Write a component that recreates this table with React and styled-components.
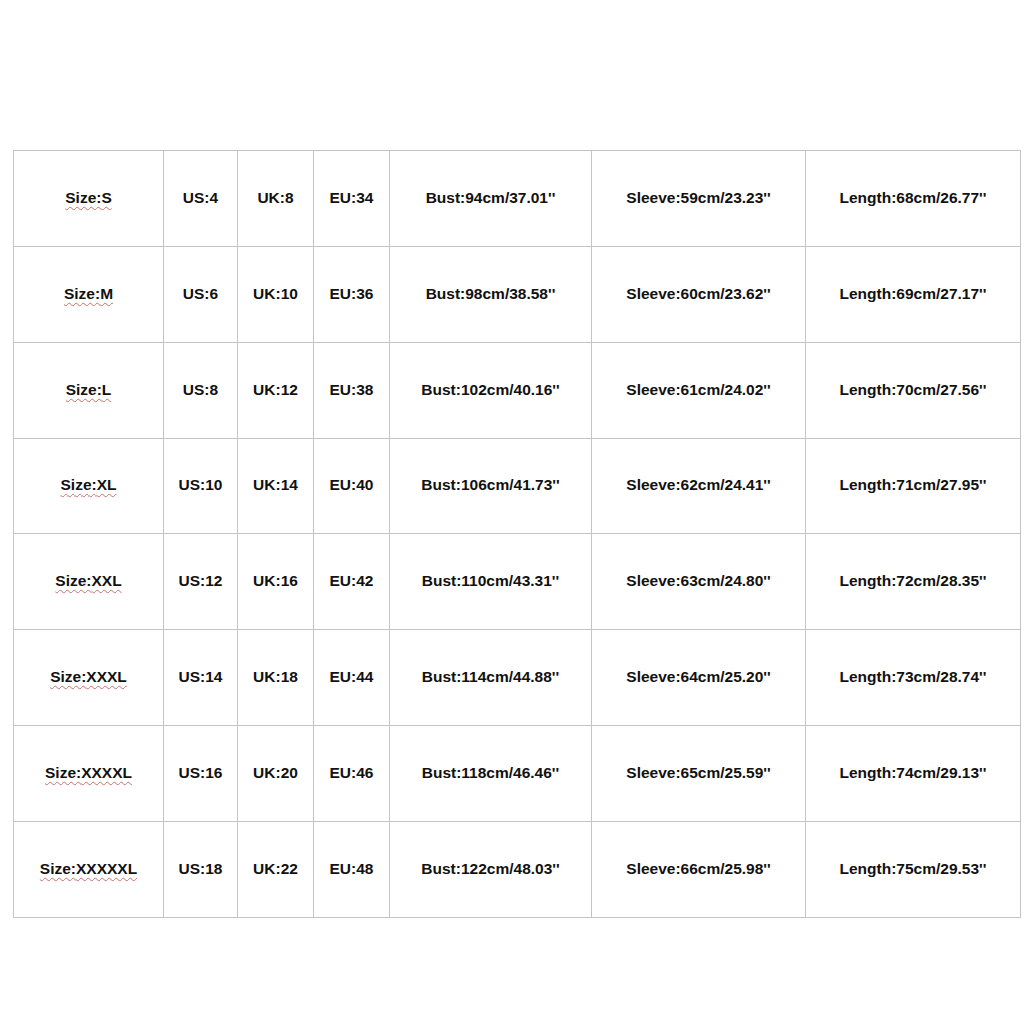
import React from 'react';
import styled, { createGlobalStyle } from 'styled-components';

const GlobalStyle = createGlobalStyle`
    html, body {
        margin: 0;
        padding: 0;
        background: #fff;
    }
`;

const Page = styled.div`
    width: 1024px;
    height: 1024px;
    background: #fff;
    padding: 150px 0 0 13px;
    box-sizing: border-box;
`;

const Table = styled.table`
    border-collapse: collapse;
    table-layout: fixed;
    width: 1007px;
    font-family: "Liberation Sans", Arial, sans-serif;
    font-weight: bold;
    font-size: 15.5px;
    color: #111;
`;

const Row = styled.tr`
    height: 95.85px;
`;

const Cell = styled.td`
    border: 1px solid #c4c4c4;
    text-align: center;
    vertical-align: middle;
    padding: 0 0 1px 0;
    white-space: nowrap;
`;

const SizeLabel = styled.span`
    text-decoration: underline wavy #c8706c;
    text-decoration-thickness: 1px;
    text-underline-offset: 3px;
`;

const widths = [150, 74, 76, 76, 202, 214, 215];

const rows = [
    ['S', 4, 8, 34, "94cm/37.01''", "59cm/23.23''", "68cm/26.77''"],
    ['M', 6, 10, 36, "98cm/38.58''", "60cm/23.62''", "69cm/27.17''"],
    ['L', 8, 12, 38, "102cm/40.16''", "61cm/24.02''", "70cm/27.56''"],
    ['XL', 10, 14, 40, "106cm/41.73''", "62cm/24.41''", "71cm/27.95''"],
    ['XXL', 12, 16, 42, "110cm/43.31''", "63cm/24.80''", "72cm/28.35''"],
    ['XXXL', 14, 18, 44, "114cm/44.88''", "64cm/25.20''", "73cm/28.74''"],
    ['XXXXL', 16, 20, 46, "118cm/46.46''", "65cm/25.59''", "74cm/29.13''"],
    ['XXXXXL', 18, 22, 48, "122cm/48.03''", "66cm/25.98''", "75cm/29.53''"],
];

const App = () => {
    return (
        <React.Fragment>
            <GlobalStyle />
            <Page>
                <Table>
                    <colgroup>
                        {widths.map((w, i) => (
                            <col key={i} style={{ width: w + 'px' }} />
                        ))}
                    </colgroup>
                    <tbody>
                        {rows.map((r) => (
                            <Row key={r[0]}>
                                <Cell><SizeLabel>Size:{r[0]}</SizeLabel></Cell>
                                <Cell>US:{r[1]}</Cell>
                                <Cell>UK:{r[2]}</Cell>
                                <Cell>EU:{r[3]}</Cell>
                                <Cell>Bust:{r[4]}</Cell>
                                <Cell>Sleeve:{r[5]}</Cell>
                                <Cell>Length:{r[6]}</Cell>
                            </Row>
                        ))}
                    </tbody>
                </Table>
            </Page>
        </React.Fragment>
    );
};

export default App;
